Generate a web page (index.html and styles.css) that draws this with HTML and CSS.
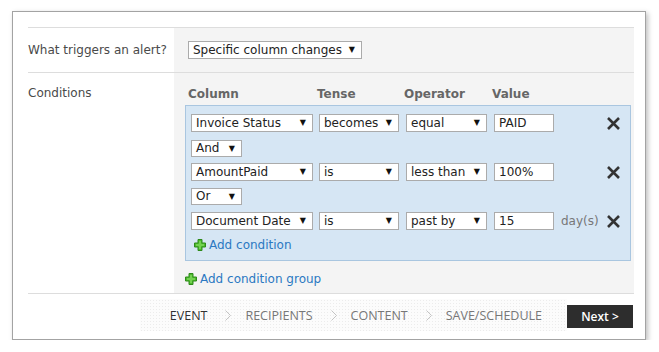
FILE: index.html
```html
<!DOCTYPE html>
<html lang="en">
<head>
  <meta charset="UTF-8">
  <title>Alert wizard</title>
  <link rel="stylesheet" href="styles.css">
</head>
<body>
  <div class="card">
    <div class="form">
      <div class="row row-trigger">
        <div class="label">What triggers an alert?</div>
        <div class="panel">
          <div class="select trigger-select"><span>Specific column changes</span><span class="arrow">▼</span></div>
        </div>
      </div>

      <div class="row row-conditions">
        <div class="label">Conditions</div>
        <div class="panel">
          <div class="heads">
            <div class="col-column">Column</div>
            <div class="col-tense">Tense</div>
            <div class="col-operator">Operator</div>
            <div class="col-value">Value</div>
          </div>

          <div class="group">
            <div class="cond">
              <div class="select col-column"><span>Invoice Status</span><span class="arrow">▼</span></div>
              <div class="select col-tense"><span>becomes</span><span class="arrow">▼</span></div>
              <div class="select col-operator"><span>equal</span><span class="arrow">▼</span></div>
              <div class="input col-value">PAID</div>
              <span class="remove"><svg width="15" height="13" viewBox="0 0 15 13"><path d="M2 1 L13 12 M13 1 L2 12" stroke="#333" stroke-width="2.6"/></svg></span>
            </div>
            <div class="select joiner"><span>And</span><span class="arrow">▼</span></div>
            <div class="cond">
              <div class="select col-column"><span>AmountPaid</span><span class="arrow">▼</span></div>
              <div class="select col-tense"><span>is</span><span class="arrow">▼</span></div>
              <div class="select col-operator"><span>less than</span><span class="arrow">▼</span></div>
              <div class="input col-value">100%</div>
              <span class="remove"><svg width="15" height="13" viewBox="0 0 15 13"><path d="M2 1 L13 12 M13 1 L2 12" stroke="#333" stroke-width="2.6"/></svg></span>
            </div>
            <div class="select joiner"><span>Or</span><span class="arrow">▼</span></div>
            <div class="cond">
              <div class="select col-column"><span>Document Date</span><span class="arrow">▼</span></div>
              <div class="select col-tense"><span>is</span><span class="arrow">▼</span></div>
              <div class="select col-operator"><span>past by</span><span class="arrow">▼</span></div>
              <div class="input col-value">15</div>
              <span class="unit">day(s)</span>
              <span class="remove"><svg width="15" height="13" viewBox="0 0 15 13"><path d="M2 1 L13 12 M13 1 L2 12" stroke="#333" stroke-width="2.6"/></svg></span>
            </div>
            <a class="add-link add-cond" href="#"><svg class="plus" width="12" height="12" viewBox="0 0 12 12"><path d="M4 0.5 H8 V4 H11.5 V8 H8 V11.5 H4 V8 H0.5 V4 H4 Z" fill="#4cbb2c" stroke="#2f8a1a" stroke-width="1"/><path d="M5 2 H7 V5 H10 V7 H7 V10 H5 V7 H2 V5 H5 Z" fill="#8fe06a" opacity="0.6"/></svg>Add condition</a>
          </div>

          <a class="add-link add-group" href="#"><svg class="plus" width="12" height="12" viewBox="0 0 12 12"><path d="M4 0.5 H8 V4 H11.5 V8 H8 V11.5 H4 V8 H0.5 V4 H4 Z" fill="#4cbb2c" stroke="#2f8a1a" stroke-width="1"/><path d="M5 2 H7 V5 H10 V7 H7 V10 H5 V7 H2 V5 H5 Z" fill="#8fe06a" opacity="0.6"/></svg>Add condition group</a>
        </div>
      </div>
    </div>

    <div class="footer">
      <div class="steps">
        <span class="step current">EVENT</span>
        <svg class="chev" width="6" height="11" viewBox="0 0 6 11"><path d="M0.5 0.5 L5.5 5.5 L0.5 10.5" fill="none" stroke="#c4c4c4"/></svg>
        <span class="step">RECIPIENTS</span>
        <svg class="chev" width="6" height="11" viewBox="0 0 6 11"><path d="M0.5 0.5 L5.5 5.5 L0.5 10.5" fill="none" stroke="#c4c4c4"/></svg>
        <span class="step">CONTENT</span>
        <svg class="chev" width="6" height="11" viewBox="0 0 6 11"><path d="M0.5 0.5 L5.5 5.5 L0.5 10.5" fill="none" stroke="#c4c4c4"/></svg>
        <span class="step">SAVE/SCHEDULE</span>
      </div>
      <button class="next-button">Next &gt;</button>
    </div>
  </div>
</body>
</html>
```

FILE: styles.css
```css
body {
  margin: 0;
  background: #fff;
  font-family: 'DejaVu Sans', Verdana, sans-serif;
  font-size: 12px;
  color: #4a4a4a;
}

.card {
  margin: 11px 0 0 12px;
  width: 606px;
  height: 312px;
  padding: 15px 11px 0 15px;
  border: 1px solid #a3a3a3;
  box-shadow: 2px 2px 5px rgba(0, 0, 0, 0.25);
  background: #fff;
}

.form {
  border-top: 1px solid #ddd;
}

.row {
  display: grid;
  grid-template-columns: 146px 1fr;
  border-bottom: 1px solid #ddd;
}

.label {
  line-height: 18px;
  color: #4a4a4a;
}

.panel {
  background: #f4f4f4;
}

.row-trigger .label {
  padding-top: 13px;
}

.row-trigger .panel {
  padding: 13px 0 13px 14px;
}

.row-conditions .label {
  padding-top: 11px;
}

.row-conditions .panel {
  padding: 12px 0 6px 11px;
}

.select, .input {
  box-sizing: border-box;
  height: 18px;
  line-height: 16px;
  border: 1px solid #ababab;
  background: #fff;
  color: #222;
  padding-left: 4px;
  white-space: nowrap;
}

.select {
  display: flex;
  justify-content: space-between;
  padding-right: 6px;
}

.arrow {
  font-size: 8px;
  color: #111;
}

.trigger-select {
  width: 174px;
}

.heads {
  display: flex;
  height: 18px;
  line-height: 18px;
  margin-bottom: 2px;
  padding-left: 3px;
  font-weight: bold;
  color: #666;
}

.heads .col-column { width: 129px; }
.heads .col-tense { width: 87px; }
.heads .col-operator { width: 88px; }

.group {
  width: 434px;
  padding: 8px 5px 7px 5px;
  border: 1px solid #a9c6e0;
  background: #d6e6f4;
}

.cond {
  display: flex;
  align-items: center;
  height: 18px;
}

.cond .col-column { width: 122px; }
.cond .col-tense { width: 80px; margin-left: 6px; }
.cond .col-operator { width: 81px; margin-left: 7px; }
.cond .col-value { width: 60px; margin-left: 7px; }

.unit {
  margin-left: 7px;
  color: #777;
}

.remove {
  display: flex;
  margin-left: auto;
  margin-right: 4px;
}

.joiner {
  width: 51px;
  height: 17px;
  line-height: 15px;
  margin: 8px 0 6px;
}

.cond + .joiner + .cond {
  margin-bottom: 7px;
}

.joiner + .cond + .joiner {
  margin-top: 0;
  margin-bottom: 7px;
}

.add-link {
  display: flex;
  align-items: center;
  height: 16px;
  color: #2b79c2;
  text-decoration: none;
}

.plus {
  margin-right: 3px;
}

.add-cond {
  margin-top: 5px;
  padding-left: 3px;
}

.add-group {
  margin-top: 10px;
}

.footer {
  display: flex;
  align-items: center;
  justify-content: flex-end;
  height: 44px;
  font-family: 'Open Sans', 'Segoe UI', sans-serif;
  font-size: 12.5px;
}

.steps {
  display: flex;
  align-items: center;
  height: 32px;
  margin-top: -2px;
  padding: 0 25px 0 30px;
  background-color: #fcfcfc;
  background-image: radial-gradient(#ececec 0.6px, transparent 0.7px);
  background-size: 3px 3px;
  color: #777;
}

.step.current {
  color: #333;
}

.chev {
  margin: 0 14px 0 18px;
}

.next-button {
  width: 66px;
  height: 23px;
  margin-right: 1px;
  border: none;
  background: #2d2d2d;
  color: #fff;
  font-family: 'Open Sans', 'Segoe UI', sans-serif;
  font-size: 12px;
  font-weight: 600;
  cursor: pointer;
}
```
